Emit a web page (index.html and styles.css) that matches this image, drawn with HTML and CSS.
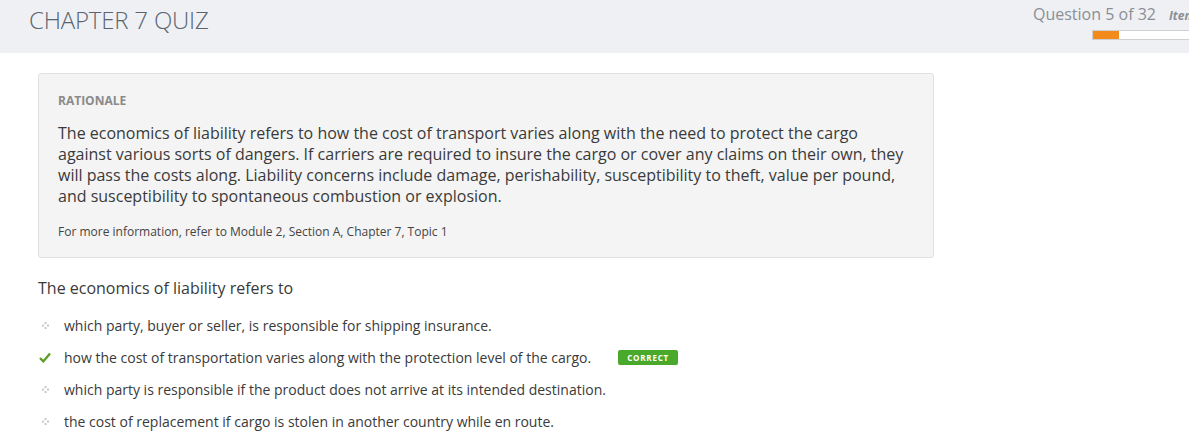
FILE: index.html
```html
<!DOCTYPE html>
<html>
<head>
<meta charset="utf-8">
<link rel="stylesheet" href="styles.css">
</head>
<body>
<header class="topbar">
  <h1 class="title">CHAPTER 7 QUIZ</h1>
  <div class="progress-area">
    <div class="progress-text"><span class="qcount">Question 5 of 32</span><span class="item">Item</span></div>
    <div class="progress"><div class="progress-fill"></div></div>
  </div>
</header>
<main class="content">
  <section class="rationale">
    <div class="rationale-label">RATIONALE</div>
    <p class="rationale-text">The economics of liability refers to how the cost of transport varies along with the need to protect the cargo against various sorts of dangers. If carriers are required to insure the cargo or cover any claims on their own, they will pass the costs along. Liability concerns include damage, perishability, susceptibility to theft, value per pound, and susceptibility to spontaneous combustion or explosion.</p>
    <p class="rationale-ref">For more information, refer to Module 2, Section A, Chapter 7, Topic 1</p>
  </section>
  <div class="question">The economics of liability refers to</div>
  <ul class="options">
    <li class="option"><span class="marker"><svg class="dot" width="7" height="7" viewBox="0 0 7 7"><rect x="2.5" y="0" width="2" height="2" fill="#c8c8c8"/><rect x="0" y="2.5" width="2" height="2" fill="#c8c8c8"/><rect x="5" y="2.5" width="2" height="2" fill="#c8c8c8"/><rect x="2.5" y="5" width="2" height="2" fill="#c8c8c8"/></svg></span><span>which party, buyer or seller, is responsible for shipping insurance.</span></li>
    <li class="option"><span class="marker"><svg width="12" height="11" viewBox="0 0 12 11"><path d="M1 6 L4.3 9.4 L11 1.4" fill="none" stroke="#5d9e22" stroke-width="2.3" stroke-linecap="butt" stroke-linejoin="miter"/></svg></span><span>how the cost of transportation varies along with the protection level of the cargo.</span><span class="badge">CORRECT</span></li>
    <li class="option"><span class="marker"><svg class="dot" width="7" height="7" viewBox="0 0 7 7"><rect x="2.5" y="0" width="2" height="2" fill="#c8c8c8"/><rect x="0" y="2.5" width="2" height="2" fill="#c8c8c8"/><rect x="5" y="2.5" width="2" height="2" fill="#c8c8c8"/><rect x="2.5" y="5" width="2" height="2" fill="#c8c8c8"/></svg></span><span>which party is responsible if the product does not arrive at its intended destination.</span></li>
    <li class="option"><span class="marker"><svg class="dot" width="7" height="7" viewBox="0 0 7 7"><rect x="2.5" y="0" width="2" height="2" fill="#c8c8c8"/><rect x="0" y="2.5" width="2" height="2" fill="#c8c8c8"/><rect x="5" y="2.5" width="2" height="2" fill="#c8c8c8"/><rect x="2.5" y="5" width="2" height="2" fill="#c8c8c8"/></svg></span><span>the cost of replacement if cargo is stolen in another country while en route.</span></li>
  </ul>
</main>
</body>
</html>
```
FILE: styles.css
```css
* { box-sizing: border-box; }
html, body { margin: 0; padding: 0; overflow: hidden; }
body {
  font-family: "Open Sans", "Liberation Sans", sans-serif;
  color: #333;
  background: #fff;
  width: 1189px;
  height: 435px;
}
.topbar {
  height: 53px;
  background: #eff0f4;
  display: flex;
  justify-content: space-between;
  align-items: flex-start;
}
.title {
  margin: 0;
  padding: 5px 0 0 29px;
  font-size: 24px;
  font-weight: 300;
  color: #5a6470;
  line-height: 30px;
  letter-spacing: -0.2px;
}
.progress-area {
  display: flex;
  flex-direction: column;
  align-items: flex-start;
  padding-top: 3px;
  width: 156px;
  overflow: hidden;
}
.progress-text {
  white-space: nowrap;
  line-height: 22px;
}
.qcount {
  font-size: 16px;
  color: #8a8f96;
}
.item {
  font-size: 12px;
  font-style: italic;
  font-weight: 700;
  color: #8a8f96;
  margin-left: 13px;
}
.progress {
  margin: 3px 0 0 59px;
  width: 120px;
  height: 10px;
  background: #fff;
  border: 1px solid #cfd0d2;
  flex-shrink: 0;
}
.progress-fill {
  width: 26px;
  height: 100%;
  background: #f28a1c;
}
.content {
  padding: 20px 0 0 38px;
}
.rationale {
  width: 896px;
  background: #f4f4f4;
  border: 1px solid #e1e1e1;
  border-radius: 3px;
  padding: 19px 20px 17px 19px;
}
.rationale-label {
  font-size: 12px;
  font-weight: 700;
  color: #8a8a8a;
  line-height: 16px;
}
.rationale-text {
  margin: 14px 0 0;
  font-size: 16px;
  line-height: 21px;
  color: #3a3a3a;
}
.rationale-ref {
  margin: 17px 0 0;
  font-size: 12px;
  line-height: 16px;
  color: #444;
}
.question {
  margin-top: 19px;
  font-size: 16px;
  line-height: 22px;
  color: #3a3a3a;
}
.options {
  list-style: none;
  margin: 10px 0 0;
  padding: 0;
}
.option {
  display: flex;
  align-items: center;
  height: 32px;
  font-size: 14px;
  color: #3a3a3a;
}
.marker {
  width: 26px;
  display: flex;
  justify-content: flex-start;
  align-items: center;
  padding-left: 1px;
}
.marker .dot {
  margin-left: 3px;
}
.badge {
  margin-left: 27px;
  background: #4aa82a;
  color: #fff;
  font-size: 8px;
  font-weight: 700;
  letter-spacing: 0.8px;
  border-radius: 2px;
  padding: 0 9px;
  line-height: 15px;
  height: 15px;
}
```
